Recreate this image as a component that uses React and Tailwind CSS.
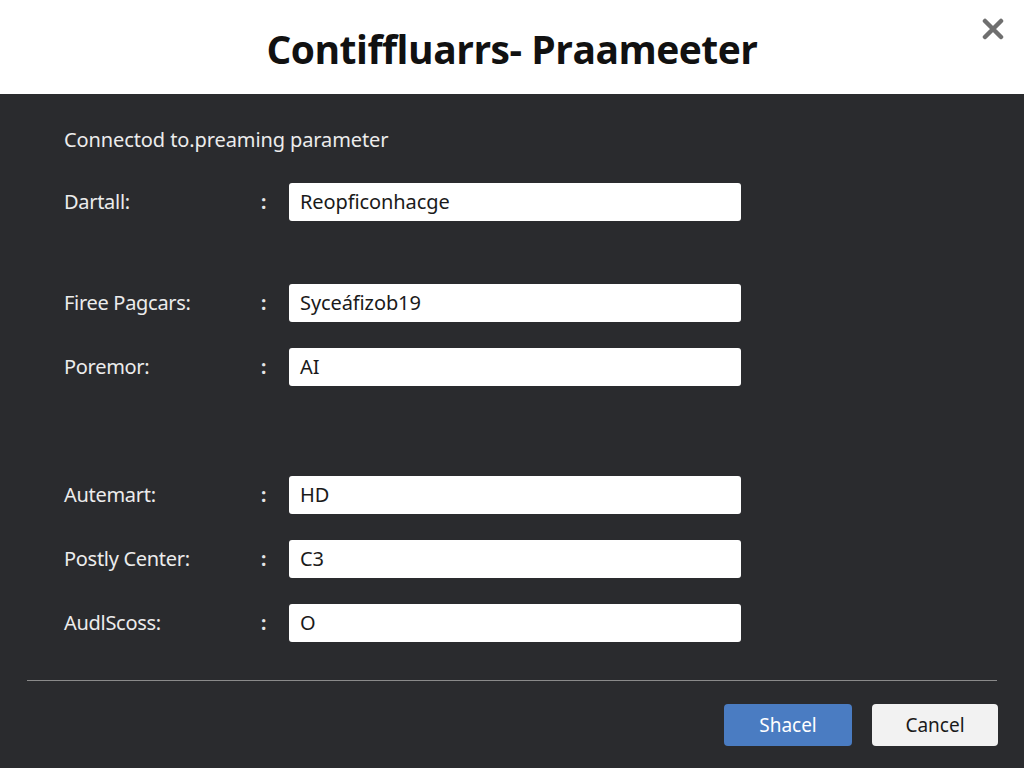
import React from 'react';

const rows = [
  { label: 'Dartall:', value: 'Reopficonhacge', mt: 'mt-[30px]' },
  { label: 'Firee Pagcars:', value: 'Syceáfizob19', mt: 'mt-[63px]' },
  { label: 'Poremor:', value: 'AI', mt: 'mt-[26px]' },
  { label: 'Autemart:', value: 'HD', mt: 'mt-[90px]' },
  { label: 'Postly Center:', value: 'C3', mt: 'mt-[26px]' },
  { label: 'AudlScoss:', value: 'O', mt: 'mt-[26px]' },
];

function Row({ label, value, mt }) {
  return (
    <div className={`${mt} flex items-center h-[38px]`}>
      <span className="w-[197px] text-[20px] text-[#ececec] tracking-[-0.3px]">{label}</span>
      <span className="w-[28px] text-[19px] font-bold text-[#e5e5e5]">:</span>
      <div className="w-[452px] h-[38px] rounded-[3px] bg-white flex items-center px-[11px] text-[20px] text-[#1a1a1a] tracking-[-0.1px]">
        {value}
      </div>
    </div>
  );
}

export default function App() {
  return (
    <div className="w-[1024px] h-[768px] flex flex-col bg-[#2a2b2e] overflow-hidden" style={{ fontFamily: '"Noto Sans", "Open Sans", sans-serif' }}>
      {/* Header */}
      <header className="relative h-[94px] shrink-0 bg-white flex items-center justify-center">
        <h1 className="text-[39px] font-bold text-[#111] tracking-[-0.5px] mt-[4px]" style={{ fontFamily: '"Open Sans", sans-serif' }}>
          Contiffluarrs- Praameeter
        </h1>
        <svg className="absolute right-[20px] top-[18px]" width="22" height="22" viewBox="0 0 22 22">
          <path d="M3 3 L19 19 M19 3 L3 19" stroke="#6f6f6f" strokeWidth="4.5" strokeLinecap="round" />
        </svg>
      </header>

      {/* Body */}
      <div className="flex-1 flex flex-col px-[64px] pt-[33px]">
        <p className="text-[20px] text-[#ececec] leading-[26px] tracking-[-0.1px]">Connectod to.preaming parameter</p>
        {rows.map((r) => (
          <Row key={r.label} {...r} />
        ))}
      </div>

      {/* Footer */}
      <div className="mx-[27px] h-px bg-[#8a8a8a]" />
      <div className="h-[87px] shrink-0 flex items-start justify-end gap-[20px] pr-[26px] pt-[23px]">
        <button className="w-[128px] h-[42px] rounded-[4px] bg-[#4a7cc2] text-white text-[19px]">Shacel</button>
        <button className="w-[126px] h-[42px] rounded-[4px] bg-[#f2f2f2] text-[#1a1a1a] text-[19px]">Cancel</button>
      </div>
    </div>
  );
}
